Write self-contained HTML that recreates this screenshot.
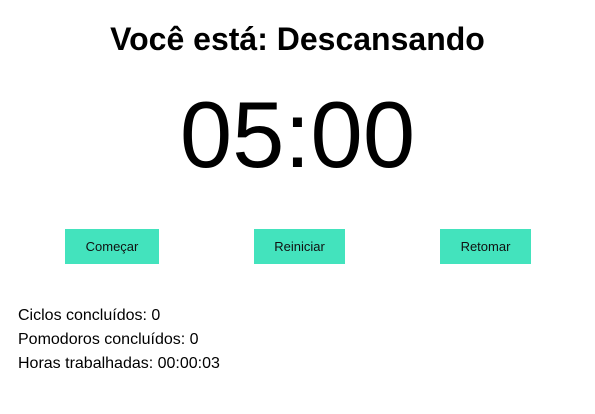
<!DOCTYPE html>
<html><head><meta charset="utf-8"><style>
html,body{margin:0;padding:0;background:#fff;width:595px;height:414px;overflow:hidden;font-family:"Liberation Sans",Arial,sans-serif;color:#000}
.t{position:absolute;left:0;width:595px;text-align:center;white-space:nowrap}
h1{margin:0;font-size:32px;font-weight:bold;top:19px;line-height:40px}
.timer{top:80px;font-size:94px;line-height:110px}
.b{position:absolute;top:229px;height:35px;background:#43e3bd;font-size:13px;line-height:35px;text-align:center;color:#111}
.s{position:absolute;left:18px;top:304px;font-size:16px;line-height:24px}
</style></head><body>
<h1 class="t">Você está: Descansando</h1>
<div class="t timer">05:00</div>
<div class="b" style="left:65px;width:94px">Começar</div>
<div class="b" style="left:254px;width:91px">Reiniciar</div>
<div class="b" style="left:440px;width:91px">Retomar</div>
<div class="s">Ciclos concluídos: 0<br>Pomodoros concluídos: 0<br>Horas trabalhadas: 00:00:03</div>
</body></html>
